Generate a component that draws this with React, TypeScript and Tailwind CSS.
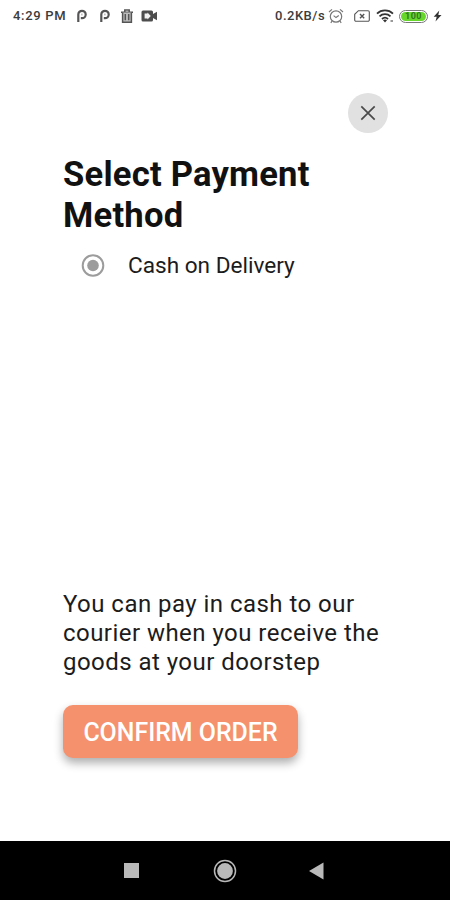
import { useState } from "react";

export default function App() {
  const [method, setMethod] = useState("cash");

  return (
    <div className="flex h-[900px] w-[450px] flex-col overflow-hidden bg-white font-[Roboto,sans-serif] text-[#111111]">
      <StatusBar />

      <main className="flex flex-1 flex-col px-[63px]">
        <button
          type="button"
          aria-label="Close"
          className="mt-[61px] mr-[-1px] flex size-10 items-center justify-center self-end rounded-full bg-[#e1e1e1]"
        >
          <svg viewBox="0 0 16 16" className="size-4" fill="none" stroke="#4a4a4a" strokeWidth="1.7">
            <path d="M1.3 1.3 14.7 14.7M14.7 1.3 1.3 14.7" />
          </svg>
        </button>

        <h1 className="mt-[21px] text-[34.6px] leading-[41px] font-bold tracking-[0.22px] whitespace-nowrap">
          Select Payment
          <br />
          Method
        </h1>

        <label className="mt-[15px] ml-[18px] flex items-center gap-[23px] text-[22.6px] leading-[30px] whitespace-nowrap text-[#1c1c1c]">
          <input
            type="radio"
            name="method"
            className="sr-only"
            checked={method === "cash"}
            onChange={() => setMethod("cash")}
          />
          <svg viewBox="0 0 24 24" className="size-6">
            <circle cx="12" cy="11.5" r="10.3" fill="none" stroke="#9c9c9c" strokeWidth="2" />
            <circle cx="12" cy="11.5" r="5.8" fill="#9c9c9c" />
          </svg>
          Cash on Delivery
        </label>

        <p className="mt-[309px] text-[24px] leading-[29px] tracking-[0.46px] whitespace-nowrap text-[#1c1c1c]">
          You can pay in cash to our
          <br />
          courier when you receive the
          <br />
          goods at your doorstep
        </p>

        <button
          type="button"
          className="mt-7 h-[53px] w-[235px] rounded-[10px] bg-[#f5916c] pt-0.5 text-[24.9px] font-medium whitespace-nowrap text-white shadow-[0_5px_10px_rgba(0,0,0,0.32)]"
        >
          CONFIRM ORDER
        </button>
      </main>

      <NavigationBar />
    </div>
  );
}

function StatusBar() {
  return (
    <header className="flex h-8 shrink-0 items-center pr-2 pl-[13px] text-[13px] font-medium text-[#3c3c3c]">
      <span className="w-[63px] tracking-[0.7px] whitespace-nowrap">4:29 PM</span>
      <ParkingIcon />
      <ParkingIcon />
      <svg viewBox="0 0 14 14" className="ml-[-2px] size-[14px]" fill="none" stroke="#555555" strokeWidth="1.5">
        <path d="M1 3.2h12M4.8 3V1h4.4v2" />
        <path d="M2.6 3.4v9.8h8.8V3.4M5.3 5v6.2M8.7 5v6.2" fill="#bdbdbd" />
      </svg>
      <svg viewBox="0 0 17 12" className="ml-[7px] h-3 w-[17px]">
        <path
          d="M2 .5h8.500a1.500 1.500 0 0 1 1.500 1.500v2l4-2.200v8.400L12 8v2a1.500 1.500 0 0 1-1.500 1.500H2A1.500 1.500 0 0 1 .5 10V2A1.500 1.500 0 0 1 2 .5Z"
          fill="#4d4d4d"
        />
        <path d="M3.6 3.4h2.9v-1L9.8 6 6.5 9.6v-1H3.6Z" fill="#f2f2f2" />
      </svg>

      <span className="ml-auto w-[53px] tracking-[0.5px] whitespace-nowrap">0.2KB/s</span>
      <svg viewBox="0 0 16 16" className="size-4" fill="none" stroke="#777777" strokeWidth="1.2">
        <circle cx="8" cy="8.5" r="5.7" />
        <path d="m5.6 7.6 2.4 2 2.8-2M1 4l3-2.6M15 4l-3-2.6M4 13.2l-1.2 1.6M12 13.2l1.2 1.6" />
      </svg>
      <svg viewBox="0 0 16 12" className="ml-[10px] h-3 w-4" fill="none" stroke="#555555" strokeWidth="1.1">
        <path d="M4.4.7H14a1.3 1.3 0 0 1 1.3 1.3v8a1.3 1.3 0 0 1-1.3 1.3H2A1.3 1.3 0 0 1 .7 10V4.3Z" />
        <path d="m6 4 4.2 4.2M10.2 4 6 8.2" strokeWidth="1.4" />
      </svg>
      <svg viewBox="0 0 18 14" className="ml-1.5 h-[14px] w-[18px]" fill="none" stroke="#333333" strokeWidth="1.8">
        <path d="M1 4.7a11.5 11.5 0 0 1 16 0M3.5 7.4a8 8 0 0 1 11 0M6 10a4.5 4.5 0 0 1 6 0" />
        <path d="m9 13.4-2-2.1a3 3 0 0 1 4 0Z" fill="#333333" stroke="none" />
        <path d="M14.5 12H17" stroke="#999999" strokeWidth="2" />
      </svg>
      <span className="ml-[5px] flex h-[13px] w-[29px] items-center justify-center rounded-full border border-[#777777] p-px">
        <span className="flex h-full w-full items-center justify-center rounded-full bg-[#67d72c] text-[9px] leading-none font-bold tracking-[0.5px] text-[#347522]">
          100
        </span>
      </span>
      <svg viewBox="0 0 9 12" className="ml-[5px] h-3 w-[9px]" fill="#333333">
        <path d="M6.3.5.7 6.7h3L2.5 11.5l6-6.5H5.3Z" />
      </svg>
    </header>
  );
}

function ParkingIcon() {
  return (
    <svg viewBox="0 0 12 14" className="mr-[11px] h-[14px] w-3" fill="none" stroke="#555555" strokeWidth="2.2">
      <path d="M2.3 13V5.5A3.7 3.7 0 1 1 6 9.2H4.800" />
      <path d="M5.9 4.6v1.800" strokeWidth="1" stroke="#999999" />
    </svg>
  );
}

function NavigationBar() {
  return (
    <nav className="flex h-[59px] shrink-0 items-center justify-between bg-black pr-[126px] pl-[124px]">
      <button type="button" aria-label="Recent apps" className="size-[15px] bg-[#b9b9b9]" />
      <button type="button" aria-label="Home" className="ml-0.5">
        <svg viewBox="0 0 24 24" className="size-6">
          <circle cx="12" cy="12" r="10.5" fill="none" stroke="#b9b9b9" strokeWidth="1.5" />
          <circle cx="12" cy="12" r="7.9" fill="#b9b9b9" />
        </svg>
      </button>
      <button type="button" aria-label="Back">
        <svg viewBox="0 0 15 18" className="h-[18px] w-[15px]" fill="#b9b9b9">
          <path d="M0 9 14.5.5v17Z" />
        </svg>
      </button>
    </nav>
  );
}
